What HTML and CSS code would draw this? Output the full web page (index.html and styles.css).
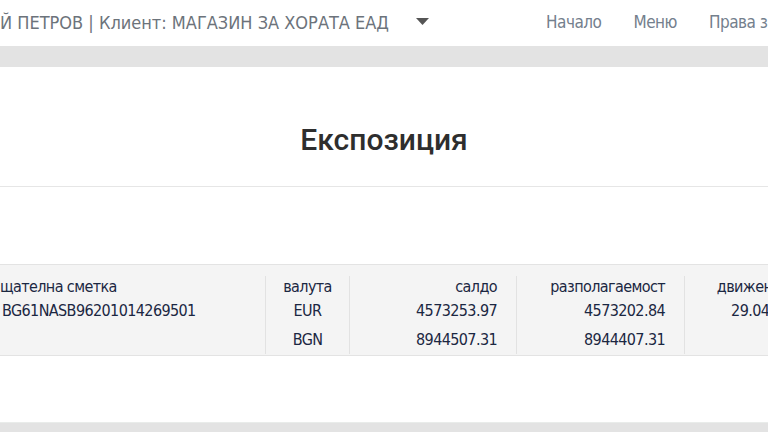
FILE: index.html
```html
<!DOCTYPE html>
<html lang="bg">
<head>
<meta charset="utf-8">
<title>Експозиция</title>
<link rel="stylesheet" href="styles.css">
</head>
<body>
<header class="topbar">
  <div class="who">Й ПЕТРОВ | Клиент: МАГАЗИН ЗА ХОРАТА ЕАД</div>
  <svg class="caret" width="13" height="7" viewBox="0 0 13 7"><path d="M0 0H13L6.5 7Z" fill="#555"/></svg>
  <nav class="nav">
    <a class="nav-item">Начало</a>
    <a class="nav-item">Меню</a>
    <a class="nav-item">Права за достъп</a>
  </nav>
</header>
<main class="page">
  <section class="card">
    <div class="title-wrap">
      <h1 class="title">Експозиция</h1>
    </div>
    <div class="table">
      <div class="col col-acc">
        <div class="cell head">щателна сметка</div>
        <div class="cell r1">BG61NASB96201014269501</div>
        <div class="cell r2"></div>
      </div>
      <div class="col col-cur">
        <div class="cell head">валута</div>
        <div class="cell r1">EUR</div>
        <div class="cell r2">BGN</div>
      </div>
      <div class="col col-num">
        <div class="cell head">салдо</div>
        <div class="cell r1">4573253.97</div>
        <div class="cell r2">8944507.31</div>
      </div>
      <div class="col col-num">
        <div class="cell head">разполагаемост</div>
        <div class="cell r1">4573202.84</div>
        <div class="cell r2">8944407.31</div>
      </div>
      <div class="col col-mov">
        <div class="cell head">движение по сметка</div>
        <div class="cell r1">29.04.2021 10:15</div>
        <div class="cell r2"></div>
      </div>
    </div>
  </section>
</main>
</body>
</html>
```
FILE: styles.css
```css
html, body {
  margin: 0;
  padding: 0;
}
body {
  width: 768px;
  height: 432px;
  overflow: hidden;
  background: #e3e3e3;
  font-family: "Liberation Sans Narrow", "DejaVu Sans Condensed", "Roboto", sans-serif;
}
.topbar {
  height: 46px;
  background: #ffffff;
  display: flex;
  align-items: center;
  white-space: nowrap;
  overflow: hidden;
}
.who {
  font-size: 18px;
  color: #6c737b;
  padding-bottom: 2px;
}
.caret {
  margin-left: 27px;
  margin-bottom: 4px;
  flex: none;
}
.nav {
  display: flex;
  margin-left: 117px;
  gap: 32px;
  flex: none;
}
.nav-item {
  font-size: 17px;
  letter-spacing: -0.5px;
  color: #74808d;
  padding-bottom: 2px;
}
.page {
  padding-top: 21px;
}
.card {
  background: #ffffff;
  height: 355px;
  overflow: hidden;
  border-bottom: 1px solid #e9ecea;
}
.title-wrap {
  padding: 55px 0 28px;
  border-bottom: 1px solid #e6e6e6;
  text-align: center;
}
.title {
  margin: 0;
  font-family: "Roboto", sans-serif;
  font-weight: 500;
  font-size: 30px;
  line-height: 36px;
  color: #2e2e2e;
}
.table {
  margin-top: 77px;
  margin-left: -42px;
  display: grid;
  grid-template-columns: 307px 84px 167px 168px 212px;
  background: #f4f4f4;
  border-top: 1px solid #e3e3e3;
  border-bottom: 1px solid #e3e3e3;
  padding: 11px 0 1px;
  font-size: 16px;
  letter-spacing: -0.6px;
  color: #1b2742;
  white-space: nowrap;
}
.col + .col {
  border-left: 1px solid #e2e2e2;
}
.cell {
  display: flex;
  align-items: center;
}
.head { height: 21px; }
.r1 { height: 27px; }
.r2 { height: 30px; }
.col-acc .cell { justify-content: flex-start; padding-left: 44px; }
.col-acc .head { padding-left: 42px; }
.col-cur .cell { justify-content: center; }
.col-num .cell { justify-content: flex-end; padding-right: 19px; }
.col-mov .cell { justify-content: center; }
```
